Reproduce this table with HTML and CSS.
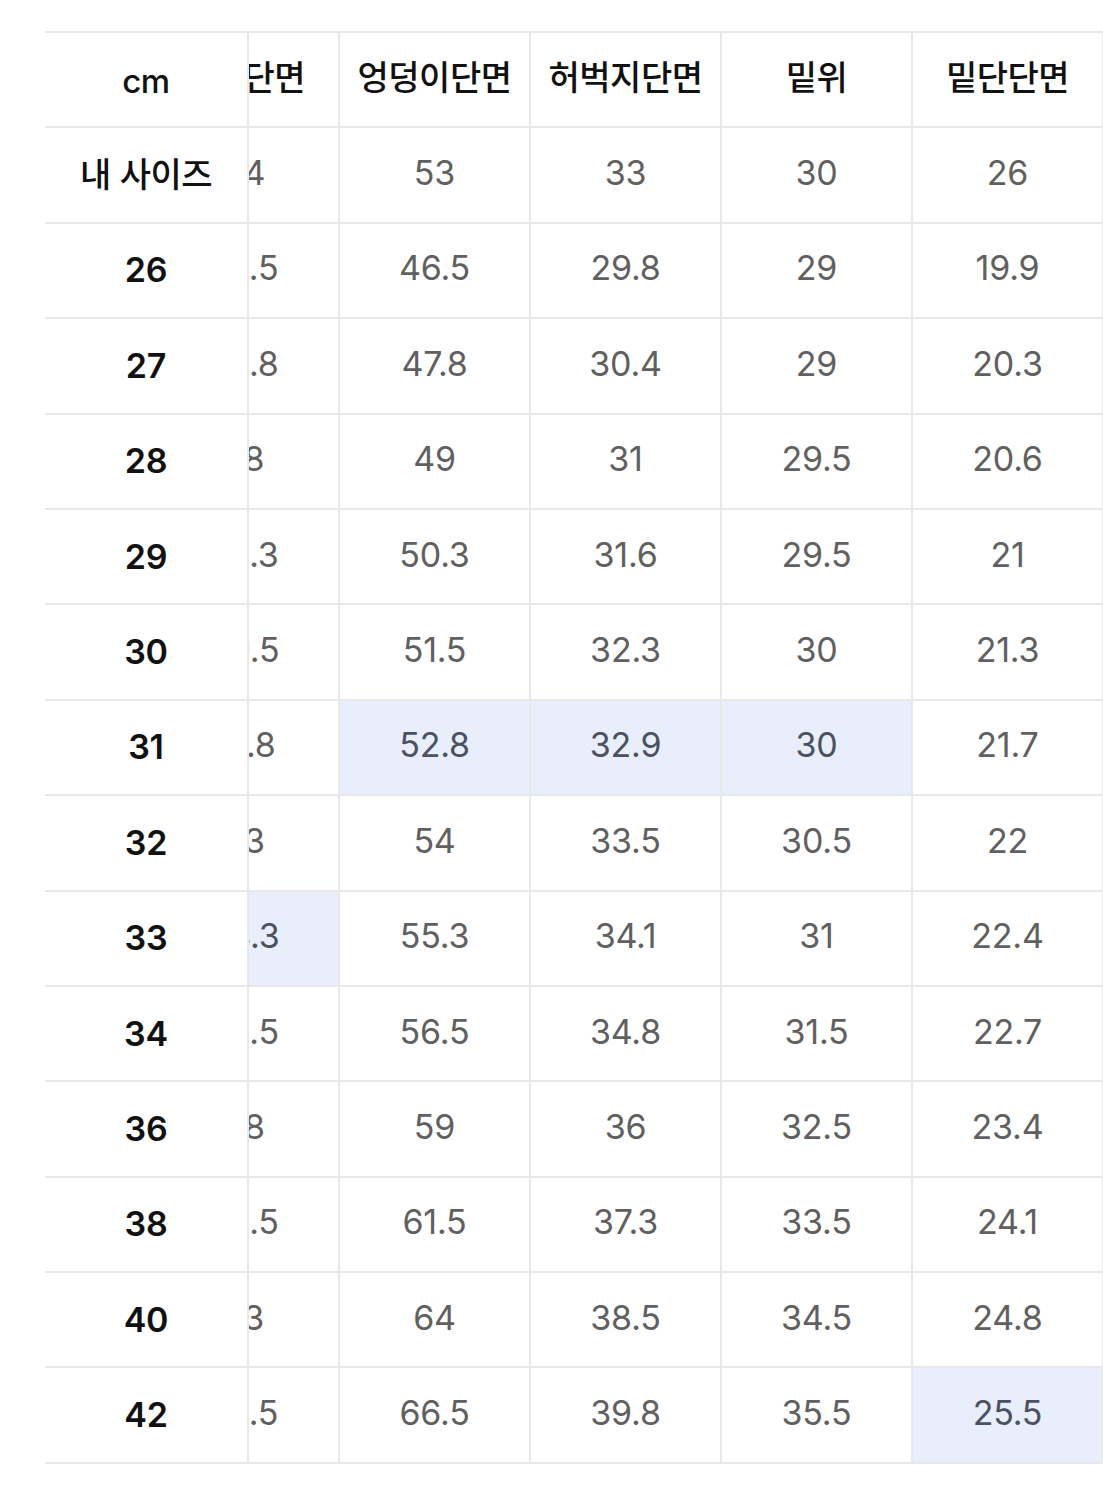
FILE: index.html
```html
<!DOCTYPE html>
<html lang="ko">
<head>
<meta charset="utf-8">
<title>사이즈표</title>
<link rel="stylesheet" href="styles.css">
</head>
<body>
<div class="sheet">
  <div class="frozen">
    <div class="cell head">cm</div>
    <div class="cell label kr">내 사이즈</div>
    <div class="cell label">26</div>
    <div class="cell label">27</div>
    <div class="cell label">28</div>
    <div class="cell label">29</div>
    <div class="cell label">30</div>
    <div class="cell label">31</div>
    <div class="cell label">32</div>
    <div class="cell label">33</div>
    <div class="cell label">34</div>
    <div class="cell label">36</div>
    <div class="cell label">38</div>
    <div class="cell label">40</div>
    <div class="cell label">42</div>
  </div>
  <div class="scroller">
    <div class="grid">
      <div class="cell head">허리단면</div><div class="cell head">엉덩이단면</div><div class="cell head">허벅지단면</div><div class="cell head">밑위</div><div class="cell head">밑단단면</div>
      <div class="cell">44</div><div class="cell">53</div><div class="cell">33</div><div class="cell">30</div><div class="cell">26</div>
      <div class="cell">35.5</div><div class="cell">46.5</div><div class="cell">29.8</div><div class="cell">29</div><div class="cell">19.9</div>
      <div class="cell">36.8</div><div class="cell">47.8</div><div class="cell">30.4</div><div class="cell">29</div><div class="cell">20.3</div>
      <div class="cell">38</div><div class="cell">49</div><div class="cell">31</div><div class="cell">29.5</div><div class="cell">20.6</div>
      <div class="cell">39.3</div><div class="cell">50.3</div><div class="cell">31.6</div><div class="cell">29.5</div><div class="cell">21</div>
      <div class="cell">40.5</div><div class="cell">51.5</div><div class="cell">32.3</div><div class="cell">30</div><div class="cell">21.3</div>
      <div class="cell">41.8</div><div class="cell hl">52.8</div><div class="cell hl">32.9</div><div class="cell hl">30</div><div class="cell">21.7</div>
      <div class="cell">43</div><div class="cell">54</div><div class="cell">33.5</div><div class="cell">30.5</div><div class="cell">22</div>
      <div class="cell hl">44.3</div><div class="cell">55.3</div><div class="cell">34.1</div><div class="cell">31</div><div class="cell">22.4</div>
      <div class="cell">45.5</div><div class="cell">56.5</div><div class="cell">34.8</div><div class="cell">31.5</div><div class="cell">22.7</div>
      <div class="cell">48</div><div class="cell">59</div><div class="cell">36</div><div class="cell">32.5</div><div class="cell">23.4</div>
      <div class="cell">50.5</div><div class="cell">61.5</div><div class="cell">37.3</div><div class="cell">33.5</div><div class="cell">24.1</div>
      <div class="cell">53</div><div class="cell">64</div><div class="cell">38.5</div><div class="cell">34.5</div><div class="cell">24.8</div>
      <div class="cell">55.5</div><div class="cell">66.5</div><div class="cell">39.8</div><div class="cell">35.5</div><div class="cell hl">25.5</div>
    </div>
  </div>
</div>
</body>
</html>
```

FILE: styles.css
```css
html, body {
  margin: 0;
  padding: 0;
  background: #ffffff;
  overflow: hidden;
}

body {
  font-family: Inter, "Noto Sans CJK KR", sans-serif;
  width: 1103px;
}

.sheet {
  display: flex;
  margin: 31px 0 0 45px;
  border-top: 2px solid #e8e8e8;
  overflow: hidden;
}

.frozen {
  flex: none;
  width: 204px;
  border-right: 2px solid #e8e8e8;
  box-sizing: border-box;
}

.scroller {
  flex: 1;
  overflow: hidden;
}

.grid {
  display: grid;
  grid-template-columns: repeat(5, 191px);
  width: max-content;
  margin-left: -100px;
}

.cell {
  box-sizing: border-box;
  height: 95.4px;
  border-bottom: 2px solid #e8e8e8;
  display: flex;
  align-items: center;
  justify-content: center;
  font-size: 34px;
  color: #606060;
  white-space: nowrap;
  letter-spacing: -0.2px;
  padding-bottom: 5px;
}

.grid .cell {
  border-right: 2px solid #e8e8e8;
}

.cell.head {
  font-family: "Noto Sans CJK KR", sans-serif;
  font-size: 34px;
  font-weight: 500;
  color: #111111;
  letter-spacing: -0.5px;
  padding-bottom: 8px;
}

.frozen .cell.head {
  font-family: Inter, "Noto Sans CJK KR", sans-serif;
  font-size: 33px;
  padding-bottom: 0;
  padding-top: 2px;
}

.cell.label {
  color: #111111;
  font-weight: 600;
  font-size: 34px;
  padding-bottom: 1px;
}

.cell.label.kr {
  font-family: "Noto Sans CJK KR", sans-serif;
  font-weight: 500;
  font-size: 34px;
  letter-spacing: -0.5px;
  padding-bottom: 6px;
}

.cell.hl {
  background: #e8eefb;
  color: #4b5161;
}
```
